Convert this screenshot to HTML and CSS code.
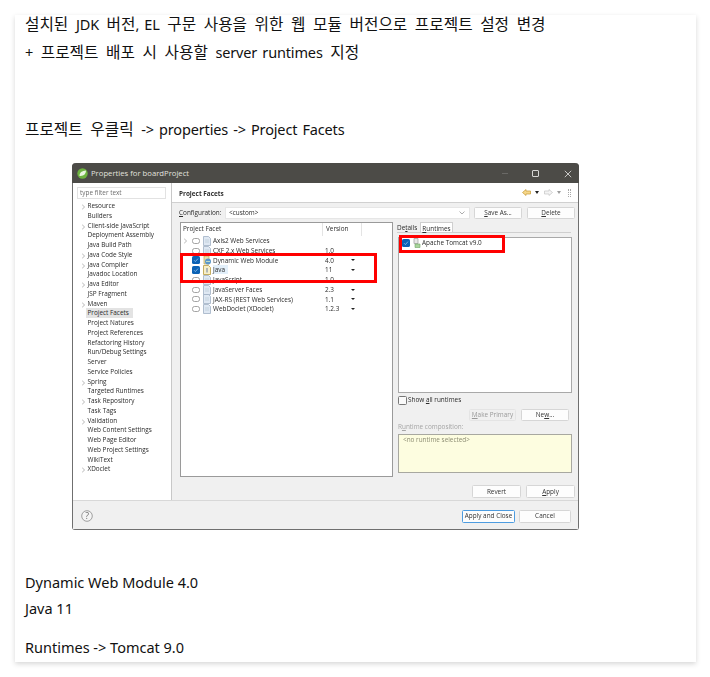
FILE: index.html
```html
<!DOCTYPE html>
<html lang="ko">
<head>
<meta charset="utf-8">
<title>프로젝트 설정</title>
<link rel="stylesheet" href="styles.css">
</head>
<body>
<svg class="defs" width="0" height="0" aria-hidden="true">
  <symbol id="file" viewBox="0 0 8 10"><path d="M.5.5h5l2 2v7h-7z" fill="#dfe8f3" stroke="#9fb0c4" stroke-width=".8"/><path d="M2 4h4M2 6h4" stroke="#b4c2d2" stroke-width=".6"/></symbol>
  <symbol id="chev" viewBox="0 0 5 6"><path d="M1.2.8 3.6 3 1.2 5.2" fill="none" stroke="#a5a5a5" stroke-width=".8"/></symbol>
  <symbol id="chk" viewBox="0 0 8 8"><rect width="8" height="8" rx="1.6" fill="#0b62b5"/><path d="M2 4.2 3.4 5.6 6 2.6" fill="none" stroke="#8fc0ee" stroke-width=".8"/></symbol>
  <symbol id="unchk" viewBox="0 0 8 8"><rect x=".5" y="1.500" width="7" height="5" rx="2" fill="#fff" stroke="#8d8d8d" stroke-width=".8"/></symbol>
</svg>
<main class="card">
  <p class="line tight"><span class="ko">설치된 </span>JDK<span class="ko"> 버전</span>, EL<span class="ko"> 구문 사용을 위한 웹 모듈 버전으로 프로젝트 설정 변경</span></p>
  <p class="line tight gap-s">+<span class="ko"> 프로젝트 배포 시 사용할 </span>server runtimes<span class="ko"> 지정</span></p>
  <p class="line tight gap-xl"><span class="ko">프로젝트 우클릭 </span>-&gt; properties -&gt; Project Facets</p>

  <section class="dialog">
    <header class="titlebar">
      <svg class="logo" viewBox="0 0 11 11"><circle cx="5.5" cy="5.5" r="5.2" fill="#6db33f"/><path d="M2.5 8C2.4 4.6 5 3 9 2.6 8.8 6 7 8.4 2.5 8z" fill="#e9f5df"/></svg>
      <span class="title-text">Properties for boardProject</span>
      <span class="win-min"></span>
      <span class="win-max"></span>
      <svg class="win-close" viewBox="0 0 8 8"><path d="M.8.8l6.4 6.4M7.200.8.8 7.200" stroke="#d6d6d4" stroke-width=".9"/></svg>
    </header>
    <div class="dialog-body">
      <aside class="side">
        <div class="filter">type filter text</div>
        <ul class="tree">
          <li class="has"><svg class="chev"><use href="#chev"/></svg>Resource</li>
          <li>Builders</li>
          <li class="has"><svg class="chev"><use href="#chev"/></svg>Client-side JavaScript</li>
          <li>Deployment Assembly</li>
          <li>Java Build Path</li>
          <li class="has"><svg class="chev"><use href="#chev"/></svg>Java Code Style</li>
          <li class="has"><svg class="chev"><use href="#chev"/></svg>Java Compiler</li>
          <li>Javadoc Location</li>
          <li class="has"><svg class="chev"><use href="#chev"/></svg>Java Editor</li>
          <li>JSP Fragment</li>
          <li class="has"><svg class="chev"><use href="#chev"/></svg>Maven</li>
          <li><span class="sel">Project Facets</span></li>
          <li>Project Natures</li>
          <li>Project References</li>
          <li>Refactoring History</li>
          <li>Run/Debug Settings</li>
          <li>Server</li>
          <li>Service Policies</li>
          <li class="has"><svg class="chev"><use href="#chev"/></svg>Spring</li>
          <li>Targeted Runtimes</li>
          <li class="has"><svg class="chev"><use href="#chev"/></svg>Task Repository</li>
          <li>Task Tags</li>
          <li class="has"><svg class="chev"><use href="#chev"/></svg>Validation</li>
          <li>Web Content Settings</li>
          <li>Web Page Editor</li>
          <li>Web Project Settings</li>
          <li>WikiText</li>
          <li class="has"><svg class="chev"><use href="#chev"/></svg>XDoclet</li>
        </ul>
      </aside>
      <div class="pane">
        <div class="pane-head">
          <strong>Project Facets</strong>
          <div class="nav">
            <svg class="nav-arrow" viewBox="0 0 9 7"><path d="M.5 3.500 4 .5v1.500h4.500v3H4v1.500z" fill="#f6d78a" stroke="#c69a33" stroke-width=".7"/></svg>
            <span class="tri"></span>
            <svg class="nav-arrow" viewBox="0 0 9 7"><path d="M8.500 3.500 5 .5v1.500H.5v3H5v1.500z" fill="#f4f4f4" stroke="#c4c4c4" stroke-width=".7"/></svg>
            <span class="tri tri-off"></span>
            <span class="dots"></span>
          </div>
        </div>
        <div class="pane-content">
          <div class="config">
            <span class="config-label"><u>C</u>onfiguration:</span>
            <div class="combo"><span>&lt;custom&gt;</span><svg class="combo-chev" viewBox="0 0 6 4"><path d="M.5.5 3 3 5.500.5" fill="none" stroke="#8a8a8a" stroke-width=".7"/></svg></div>
            <span class="btn btn-save"><span><u>S</u>ave As...</span></span>
            <span class="btn btn-del"><span><u>D</u>elete</span></span>
          </div>
          <div class="columns">
            <div class="facets">
              <div class="facet-head"><span class="fh-name">Project Facet</span><span class="fh-ver">Version</span></div>
              <div class="frow"><svg class="chev"><use href="#chev"/></svg><svg class="box"><use href="#unchk"/></svg><svg class="ficon"><use href="#file"/></svg><span class="fname">Axis2 Web Services</span></div>
              <div class="frow"><span class="nochev"></span><svg class="box"><use href="#unchk"/></svg><svg class="ficon"><use href="#file"/></svg><span class="fname">CXF 2.x Web Services</span><span class="fver">1.0</span></div>
              <div class="frow"><span class="nochev"></span><svg class="box"><use href="#chk"/></svg><svg class="ficon" viewBox="0 0 8 10"><path d="M1 1h5v8H1z" fill="#e9dfb0" stroke="#c7a64a" stroke-width=".7"/><circle cx="5" cy="6.500" r="3" fill="#5c98c9"/><path d="M3 6.500h4" stroke="#d7ecc7" stroke-width=".8"/></svg><span class="fname">Dynamic Web Module</span><span class="fver">4.0</span><span class="drop"></span></div>
              <div class="frow"><span class="nochev"></span><svg class="box"><use href="#chk"/></svg><svg class="ficon" viewBox="0 0 8 10"><path d="M.5.500h5l2 2v7h-7z" fill="#f7efc9" stroke="#b79a3e" stroke-width=".8"/><path d="M4 3v4.500" stroke="#6a7fa0" stroke-width="1"/></svg><span class="fname"><span class="hl">Java</span></span><span class="fver">11</span><span class="drop"></span></div>
              <div class="frow"><span class="nochev"></span><svg class="box"><use href="#unchk"/></svg><svg class="ficon"><use href="#file"/></svg><span class="fname">JavaScript</span><span class="fver">1.0</span></div>
              <div class="frow"><span class="nochev"></span><svg class="box"><use href="#unchk"/></svg><svg class="ficon"><use href="#file"/></svg><span class="fname">JavaServer Faces</span><span class="fver">2.3</span><span class="drop"></span></div>
              <div class="frow"><span class="nochev"></span><svg class="box"><use href="#unchk"/></svg><svg class="ficon"><use href="#file"/></svg><span class="fname">JAX-RS (REST Web Services)</span><span class="fver">1.1</span><span class="drop"></span></div>
              <div class="frow"><span class="nochev"></span><svg class="box"><use href="#unchk"/></svg><svg class="ficon"><use href="#file"/></svg><span class="fname">WebDoclet (XDoclet)</span><span class="fver">1.2.3</span><span class="drop"></span></div>
            </div>
            <div class="right">
              <div class="tabs"><span class="tab">De<u>t</u>ails</span><span class="tab tab-on"><u>R</u>untimes</span></div>
              <div class="runtimes">
                <div class="rt-row"><svg class="box"><use href="#chk"/></svg><svg class="rt-icon" viewBox="0 0 8 10"><path d="M1 .5h4v5H1z" fill="#e8e8e8" stroke="#9a9a9a" stroke-width=".7"/><path d="M2 6h5v3.500H2z" fill="#a9d49c" stroke="#6fa566" stroke-width=".6"/></svg><span>Apache Tomcat v9.0</span></div>
              </div>
              <div class="show-all"><span class="square"></span><span>Show <u>a</u>ll runtimes</span></div>
              <div class="rt-btns"><span class="btn btn-off"><span><u>M</u>ake Primary</span></span><span class="btn btn-new"><span>Ne<u>w</u>...</span></span></div>
              <div class="rc-label">R<u>u</u>ntime composition:</div>
              <div class="rc-box">&lt;no runtime selected&gt;</div>
            </div>
          </div>
          <div class="apply-row"><span class="btn btn-wide">Revert</span><span class="btn btn-wide"><span><u>A</u>pply</span></span></div>
        </div>
      </div>
    </div>
    <footer class="dialog-foot">
      <svg class="help" viewBox="0 0 12 12"><circle cx="6" cy="6" r="5.300" fill="#f4f4f4" stroke="#8a8a8a" stroke-width=".8"/><text x="6" y="8.800" text-anchor="middle" class="help-q">?</text></svg>
      <span class="btn btn-primary">Apply and Close</span>
      <span class="btn btn-cancel">Cancel</span>
    </footer>
    <div class="mark mark-facets"></div>
    <div class="mark mark-runtime"></div>
  </section>

  <p class="line gap-l">Dynamic Web Module 4.0</p>
  <p class="line gap-s2">Java 11</p>
  <p class="line gap-m">Runtimes -&gt; Tomcat 9.0</p>
</main>
</body>
</html>
```

FILE: styles.css
```css
* { box-sizing: border-box; }
html, body { margin: 0; padding: 0; background: #fff; }
body { width: 710px; height: 677px; overflow: hidden; padding: 15px 14px 0 15px; }
.defs { position: absolute; }
ul { list-style: none; margin: 0; padding: 0; }
u { text-decoration-thickness: .5px; text-underline-offset: 1px; }

.card {
  width: 681px;
  height: 647px;
  padding: 0 10px;
  background: #fff;
  box-shadow: 0 2px 5px rgba(0,0,0,.16);
  font-family: "Noto Sans", "Noto Sans CJK KR", sans-serif;
  color: #111;
}
.line { margin: 0; font-size: 14.5px; line-height: 18px; white-space: nowrap; }
.tight { letter-spacing: -.15px; word-spacing: 1.500px; }
.ko { font-family: "Noto Sans CJK KR", "Noto Sans", sans-serif; font-size: 15.700px; letter-spacing: 0; word-spacing: 3.200px; }
.gap-s { margin-top: 10px; }
.gap-xl { margin-top: 59px; }
.gap-l { margin-top: 43px; }
.gap-s2 { margin-top: 8px; }
.gap-m { margin-top: 21px; }

.dialog {
  position: relative;
  width: 507px;
  height: 367px;
  margin: 25px 0 0 47px;
  display: flex;
  flex-direction: column;
  background: #f0f0f0;
  border: 1px solid #6f6f6f;
  border-top: 0;
  border-radius: 4px 4px 3px 3px;
  font-family: "Open Sans", "Noto Sans", sans-serif;
  font-size: 6.400px;
  line-height: 9.750px;
  color: #2a2a2a;
  white-space: nowrap;
  filter: blur(.25px);
}
.titlebar {
  height: 20px;
  margin: 0 -1px;
  flex: none;
  display: flex;
  align-items: center;
  padding: 1px 7px 0 5px;
  background: #4c4b47;
  border-radius: 4px 4px 0 0;
  color: #e2e2df;
  font-size: 7.700px;
}
.logo { width: 11px; height: 11px; margin-right: 3px; }
.title-text { flex: 1; }
.win-min { width: 6px; height: 1px; background: #6a6966; margin-right: 24px; }
.win-max { width: 7px; height: 7px; border: 1px solid #d6d6d4; border-radius: 1px; margin-right: 25px; }
.win-close { width: 8px; height: 8px; }

.dialog-body { flex: 1; display: flex; min-height: 0; }
.side { width: 99px; flex: none; background: #fff; border-right: 1px solid #c8c8c8; padding: 4px 0 0 4px; }
.filter { width: 89px; height: 12px; border: 1px solid #e2e2e2; padding: 0 2px; line-height: 10px; color: #6e6e6e; }
.tree { margin-top: 2px; padding-left: 10.500px; }
.tree li { height: 9.750px; position: relative; }
.tree .has .chev { position: absolute; left: -7px; top: 3px; }
.chev { width: 5px; height: 6px; flex: none; }
.sel { display: inline-block; background: #e3e3e3; margin-left: -2px; padding: 0 4px 0 2px; height: 10px; }

.pane { flex: 1; display: flex; flex-direction: column; min-width: 0; }
.pane-head { height: 20px; flex: none; display: flex; align-items: center; justify-content: space-between; padding: 3px 7px 0 7px; background: #fff; border-bottom: 1px solid #d0d0d0; color: #2f2f2f; }
.nav { display: flex; align-items: center; margin-top: -3px; }
.nav-arrow { width: 9px; height: 7px; }
.tri { width: 0; height: 0; margin: 0 5px 0 4px; border: 2.500px solid transparent; border-top: 3px solid #222; border-bottom: 0; }
.tri-off { margin-right: 7px; border-top-color: #9b9b9b; }
.dots { width: 3px; height: 8px; border: 1px dotted #a9a9a9; }

.pane-content { flex: 1; display: flex; flex-direction: column; padding: 4px 3px 0 7px; min-height: 0; }
.config { display: flex; align-items: center; height: 12px; }
.config-label { width: 46px; }
.combo { width: 245px; height: 12px; margin-right: 4px; padding: 0 4px 0 3px; display: flex; align-items: center; justify-content: space-between; background: #fff; border: 1px solid #e6e6e6; }
.combo-chev { width: 6px; height: 4px; }

.btn { display: flex; align-items: center; justify-content: center; height: 12px; background: #fdfdfd; border: 1px solid #d6d6d6; border-radius: 1.500px; color: #333; }
.btn-save { width: 48px; margin-right: 5px; }
.btn-del { width: 48px; }

.columns { display: flex; margin: 3px 0 0 1px; height: 255px; }
.facets { width: 213px; background: #fff; border: 1px solid #9a9a9a; padding-left: 2px; }
.facet-head { display: flex; height: 13px; align-items: center; }
.fh-name { width: 140px; height: 100%; line-height: 12px; border-right: 1px solid #e4e4e4; }
.fh-ver { width: 39px; height: 100%; padding-left: 3px; line-height: 12px; border-right: 1px solid #e4e4e4; }
.frow { display: flex; align-items: center; height: 9.750px; }
.nochev { width: 5px; flex: none; }
.frow .box { margin-left: 4px; }
.box { width: 8px; height: 8px; flex: none; }
.ficon { width: 8px; height: 10px; margin: 0 2px 0 3px; flex: none; }
.fname { width: 112px; flex: none; }
.hl { background: #e2effa; padding: 0 3px 0 0; }
.fver { width: 26px; flex: none; }
.drop { width: 0; height: 0; border: 2px solid transparent; border-top: 2.500px solid #222; border-bottom: 0; }

.right { width: 176px; margin-left: 4px; display: flex; flex-direction: column; }
.tabs { display: flex; height: 11px; border-bottom: 1px solid #cfcfcf; margin-right: 2px; padding-top: 1px; gap: 3px; }
.tab { padding: 0; line-height: 9px; }
.tab-on { background: #fff; border: 1px solid #cfcfcf; border-bottom: 0; margin-top: -1px; padding: 1px 1px 0; }
.runtimes { width: 174px; height: 156px; margin: 4px 0 0 1px; background: #fff; border: 1px solid #a9a9a9; padding: 0 0 0 3px; }
.rt-row { display: flex; align-items: center; height: 10px; }
.rt-icon { width: 8px; height: 10px; margin: 0 1px 0 3px; flex: none; }
.show-all { display: flex; align-items: center; height: 10px; margin: 2px 0 0 1px; }
.square { width: 9px; height: 9px; border: 1px solid #777; border-radius: 1.500px; background: #fafafa; margin: 0 1px 0 0; }
.rt-btns { display: flex; justify-content: flex-end; gap: 5px; margin: 4px 4px 0 0; }
.btn-off { width: 47px; background: #f0f0f0; border-color: #e4e4e4; color: #999; }
.btn-new { width: 48px; }
.rc-label { height: 10px; margin: 1px 0 0 1px; color: #a5a5a5; }
.rc-box { width: 174px; height: 39px; margin: 2px 0 0 1px; padding: 0 4px; background: #fdfde0; border: 1px solid #a8a8a0; color: #8c8c72; }

.apply-row { display: flex; justify-content: flex-end; gap: 5px; margin-top: 8px; }
.btn-wide { width: 49px; height: 13px; }

.dialog-foot { height: 29px; flex: none; display: flex; align-items: center; padding: 2px 7px 0 8px; border-top: 1px solid #d8d8d8; background: #f0f0f0; }
.help { width: 12px; height: 12px; margin-right: auto; }
.help-q { font-size: 8.500px; fill: #666; }
.btn-primary { width: 53px; height: 13px; border-color: #4d9ce0; margin-right: 4px; }
.btn-cancel { width: 52px; height: 13px; }

.mark { position: absolute; border: 3px solid #f00; }
.mark-facets { left: 107px; top: 90px; width: 197px; height: 30px; }
.mark-runtime { left: 326px; top: 72px; width: 106px; height: 18px; }
```
